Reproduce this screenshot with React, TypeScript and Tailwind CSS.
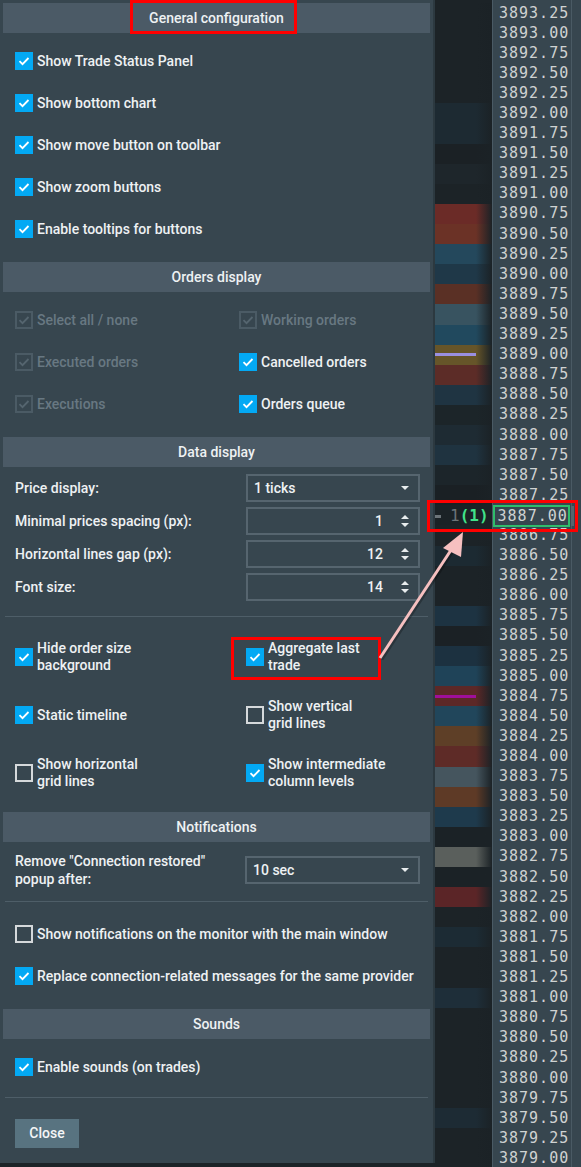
import React from 'react';

type State = 'on' | 'off' | 'disabled';

const prices: { p: string; bg: string; line?: string }[] = [
  { p: '3893.25', bg: 'bg-[#1c2327]' },
  { p: '3893.00', bg: 'bg-[#1c2327]' },
  { p: '3892.75', bg: 'bg-[#1c2327]' },
  { p: '3892.50', bg: 'bg-[#1c2327]' },
  { p: '3892.25', bg: 'bg-[#1c2327]' },
  { p: '3892.00', bg: 'bg-[#1d2a32]' },
  { p: '3891.75', bg: 'bg-[#1d2a32]' },
  { p: '3891.50', bg: 'bg-[#1b2125]' },
  { p: '3891.25', bg: 'bg-[#1e262b]' },
  { p: '3891.00', bg: 'bg-[#1c2327]' },
  { p: '3890.75', bg: 'bg-[#6b2b27]' },
  { p: '3890.50', bg: 'bg-[#6b3226]' },
  { p: '3890.25', bg: 'bg-[#24485c]' },
  { p: '3890.00', bg: 'bg-[#1f3848]' },
  { p: '3889.75', bg: 'bg-[#5a3025]' },
  { p: '3889.50', bg: 'bg-[#385360]' },
  { p: '3889.25', bg: 'bg-[#21495e]' },
  { p: '3889.00', bg: 'bg-[#665529]', line: 'bg-[#9a8fe0]' },
  { p: '3888.75', bg: 'bg-[#5c2c27]' },
  { p: '3888.50', bg: 'bg-[#1f3442]' },
  { p: '3888.25', bg: 'bg-[#1c2529]' },
  { p: '3888.00', bg: 'bg-[#1e2b33]' },
  { p: '3887.75', bg: 'bg-[#1f3340]' },
  { p: '3887.50', bg: 'bg-[#1c252a]' },
  { p: '3887.25', bg: 'bg-[#1a2024]' },
  { p: '3887.00', bg: 'bg-[#1b2226]' },
  { p: '3886.75', bg: 'bg-[#1c2327]' },
  { p: '3886.50', bg: 'bg-[#1c2a32]' },
  { p: '3886.25', bg: 'bg-[#1c2327]' },
  { p: '3886.00', bg: 'bg-[#1c2327]' },
  { p: '3885.75', bg: 'bg-[#1d3342]' },
  { p: '3885.50', bg: 'bg-[#1b2125]' },
  { p: '3885.25', bg: 'bg-[#1c3140]' },
  { p: '3885.00', bg: 'bg-[#1f4358]' },
  { p: '3884.75', bg: 'bg-[#5c2827]', line: 'bg-[#a00f9a]' },
  { p: '3884.50', bg: 'bg-[#21465b]' },
  { p: '3884.25', bg: 'bg-[#5e3f27]' },
  { p: '3884.00', bg: 'bg-[#5e2b27]' },
  { p: '3883.75', bg: 'bg-[#45555e]' },
  { p: '3883.50', bg: 'bg-[#5e3a26]' },
  { p: '3883.25', bg: 'bg-[#1e3a4c]' },
  { p: '3883.00', bg: 'bg-[#1b2226]' },
  { p: '3882.75', bg: 'bg-[#5a5f5c]' },
  { p: '3882.50', bg: 'bg-[#1b2226]' },
  { p: '3882.25', bg: 'bg-[#5b2527]' },
  { p: '3882.00', bg: 'bg-[#1c2327]' },
  { p: '3881.75', bg: 'bg-[#1c2b34]' },
  { p: '3881.50', bg: 'bg-[#1c2327]' },
  { p: '3881.25', bg: 'bg-[#1c2327]' },
  { p: '3881.00', bg: 'bg-[#1e2e39]' },
  { p: '3880.75', bg: 'bg-[#1c2327]' },
  { p: '3880.50', bg: 'bg-[#1c2327]' },
  { p: '3880.25', bg: 'bg-[#1c2327]' },
  { p: '3880.00', bg: 'bg-[#1c2327]' },
  { p: '3879.75', bg: 'bg-[#1c2327]' },
  { p: '3879.50', bg: 'bg-[#1d2b34]' },
  { p: '3879.25', bg: 'bg-[#1c2327]' },
  { p: '3879.00', bg: 'bg-[#1c2327]' },
];

function Box({ state }: { state: State }) {
  if (state === 'off') {
    return <span className="w-[18px] h-[18px] shrink-0 border-2 border-[#d5d9db]" />;
  }
  const on = state === 'on';
  return (
    <span
      className={
        on
          ? 'w-[18px] h-[18px] shrink-0 bg-[#03a9f4] flex items-center justify-center'
          : 'w-[18px] h-[18px] shrink-0 border-2 border-[#4b5b65] flex items-center justify-center'
      }
    >
      <svg width="12" height="10" viewBox="0 0 12 10" className={on ? '' : '-m-[2px]'}>
        <path d="M1.5 5.2l3 3L10.5 2" fill="none" stroke={on ? '#ffffff' : '#55656f'} strokeWidth="1.8" />
      </svg>
    </span>
  );
}

function Check({ label, state = 'on', lines }: { label: string; state?: State; lines?: string[] }) {
  return (
    <div className="flex items-center gap-[4px] h-[42px]">
      <Box state={state} />
      {lines ? (
        <span className="leading-[17px]">
          {lines.map((l) => (
            <span key={l} className="block">{l}</span>
          ))}
        </span>
      ) : (
        <span className={state === 'disabled' ? 'text-[#687882]' : ''}>{label}</span>
      )}
    </div>
  );
}

function Band({ title }: { title: string }) {
  return (
    <div className="h-[30px] bg-[#4b5a66] flex items-center justify-center text-[#eef1f3]">{title}</div>
  );
}

function Caret() {
  return (
    <svg width="10" height="6" viewBox="0 0 10 6">
      <path d="M1 1h8L5 5z" fill="#e8ecee" />
    </svg>
  );
}

function Spin() {
  return (
    <svg width="10" height="16" viewBox="0 0 10 16">
      <path d="M1 6l4-4 4 4z" fill="#e8ecee" />
      <path d="M1 10l4 4 4-4z" fill="#e8ecee" />
    </svg>
  );
}

function Field({ label, value, kind }: { label: string; value: string; kind: 'select' | 'spin' }) {
  return (
    <div className="flex items-center h-[28px] mb-[5px]">
      <span className="w-[231px]">{label}</span>
      <div className="w-[174px] h-[28px] border-2 border-[#56656f] flex items-center pl-[6px] pr-[8px]">
        {kind === 'select' ? (
          <>
            <span className="flex-1">{value}</span>
            <Caret />
          </>
        ) : (
          <>
            <span className="flex-1 text-right pr-[17px]">{value}</span>
            <Spin />
          </>
        )}
      </div>
    </div>
  );
}

function Divider() {
  return <div className="h-px bg-[#4e5e68] mx-[2px]" />;
}

export default function App() {
  return (
    <div className="relative w-[581px] h-[1167px] overflow-hidden bg-[#1c2327] flex font-['Roboto',sans-serif] text-[14px] font-medium text-[#eef1f3]">
      {/* settings panel */}
      <div className="w-[435px] h-[1163px] shrink-0 bg-[#37464f] border-r-2 border-[#2c3940] pt-[3px] px-[3px] flex flex-col">
        <Band title="General configuration" />
        <div className="pt-[7px] pb-[12px] pl-[12px]">
          <Check label="Show Trade Status Panel" />
          <Check label="Show bottom chart" />
          <Check label="Show move button on toolbar" />
          <Check label="Show zoom buttons" />
          <Check label="Enable tooltips for buttons" />
        </div>

        <Band title="Orders display" />
        <div className="pt-[7px] pb-[12px] pl-[12px] grid grid-cols-[224px_1fr]">
          <Check label="Select all / none" state="disabled" />
          <Check label="Working orders" state="disabled" />
          <Check label="Executed orders" state="disabled" />
          <Check label="Cancelled orders" />
          <Check label="Executions" state="disabled" />
          <Check label="Orders queue" />
        </div>

        <Band title="Data display" />
        <div className="pt-[7px] pl-[12px]">
          <Field label="Price display:" value="1  ticks" kind="select" />
          <Field label="Minimal prices spacing (px):" value="1" kind="spin" />
          <Field label="Horizontal lines gap (px):" value="12" kind="spin" />
          <Field label="Font size:" value="14" kind="spin" />
        </div>
        <div className="pt-[10px]">
          <Divider />
        </div>
        <div className="pt-[11px] pb-[10px] pl-[12px] grid grid-cols-[231px_1fr]">
          <div className="h-[58px] flex items-center"><Check label="" lines={['Hide order size', 'background']} /></div>
          <div className="h-[58px] flex items-center"><Check label="" lines={['Aggregate last', 'trade']} /></div>
          <div className="h-[58px] flex items-center"><Check label="Static timeline" /></div>
          <div className="h-[58px] flex items-center"><Check label="" state="off" lines={['Show vertical', 'grid lines']} /></div>
          <div className="h-[58px] flex items-center"><Check label="" state="off" lines={['Show horizontal', 'grid lines']} /></div>
          <div className="h-[58px] flex items-center"><Check label="" lines={['Show intermediate', 'column levels']} /></div>
        </div>

        <Band title="Notifications" />
        <div className="pt-[10px] pl-[12px] flex items-center">
          <span className="w-[230px] leading-[18px]">
            <span className="block">Remove "Connection restored"</span>
            <span className="block">popup after:</span>
          </span>
          <div className="w-[175px] h-[28px] border-2 border-[#56656f] flex items-center pl-[6px] pr-[8px]">
            <span className="flex-1">10 sec</span>
            <Caret />
          </div>
        </div>
        <div className="pt-[13px]">
          <Divider />
        </div>
        <div className="pt-[11px] pb-[12px] pl-[12px]">
          <Check label="Show notifications on the monitor with the main window" state="off" />
          <Check label="Replace connection-related messages for the same provider" />
        </div>

        <Band title="Sounds" />
        <div className="pt-[7px] pb-[9px] pl-[12px]">
          <Check label="Enable sounds (on trades)" />
        </div>
        <Divider />
        <div className="pt-[21px] pl-[12px]">
          <button className="w-[64px] h-[29px] bg-[#587380] text-[#f4f6f7] font-medium">Close</button>
        </div>
      </div>

      {/* heat stripes */}
      <div className="w-[57px] shrink-0 pt-[3px] flex flex-col">
        {prices.map((r) => (
          <div key={r.p} className={`h-[20.1px] shrink-0 flex ${r.bg}`}>
            <div className="flex-1 flex flex-col justify-center">
              {r.line && <div className={`h-[3px] ${r.line}`} />}
            </div>
            <div className="w-[16px] bg-gradient-to-r from-transparent to-[#1b2226]" />
          </div>
        ))}
      </div>

      {/* price ladder */}
      <div className="w-[80px] shrink-0 bg-[#37464f] border-l border-r border-[#4a5a64] pt-[3px] flex flex-col font-['DejaVu_Sans_Mono',monospace] font-normal text-[15px] tracking-[1px] text-[#cfd2d2]">
        {prices.map((r) => (
          <div key={r.p} className="h-[20.1px] shrink-0 flex items-center pl-[6px] leading-none">
            {r.p}
          </div>
        ))}
      </div>
      <div className="flex-1 bg-[#37464f]" />

      {/* last trade annotation */}
      <div className="absolute left-[430px] top-[503px] w-[144px] h-[26px] flex items-center font-['DejaVu_Sans_Mono',monospace] text-[16px] font-normal">
        <span className="w-[7px] h-[3px] bg-[#6c7479] ml-[5px] mr-[9px]" />
        <span className="text-[#6c7479]">1</span>
        <span className="text-[#41e28a] font-bold">(1)</span>
        <span className="ml-[4px] h-[22px] w-[77px] border-2 border-[#2ebd6b] bg-[#37464f] flex items-center pl-[3px] text-[15px] tracking-[1px] text-[#cfd2d2]">3887.00</span>
        <span className="ml-[1px] w-[4px] h-[20px] bg-[#56656e]" />
      </div>

      {/* highlight boxes */}
      <div className="absolute left-[130px] top-0 w-[167px] h-[34px] border-[3px] border-[#ff0000]" />
      <div className="absolute left-[427px] top-[500px] w-[151px] h-[32px] border-[3px] border-[#ff0000]" />
      <div className="absolute left-[231px] top-[637px] w-[150px] h-[43px] border-[3px] border-[#ff0000]" />

      <svg className="absolute inset-0 pointer-events-none" width="581" height="1167">
        <line x1="381" y1="659" x2="456" y2="545" stroke="#000000" strokeOpacity="0.25" strokeWidth="5" />
        <line x1="380" y1="658" x2="455" y2="544" stroke="#f6c0c0" strokeWidth="3" />
        <path d="M463 532L443 548L461 557Z" fill="#f6c0c0" />
      </svg>
    </div>
  );
}
